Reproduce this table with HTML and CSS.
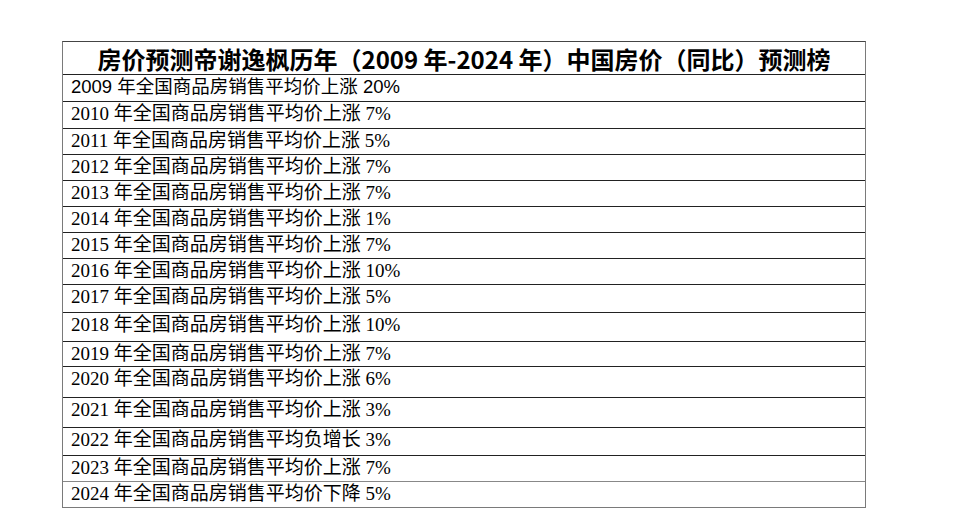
FILE: index.html
```html
<!DOCTYPE html>
<html lang="zh-CN">
<head>
<meta charset="utf-8">
<title>中国房价预测榜</title>
<link rel="stylesheet" href="styles.css">
</head>
<body>
<div class="page">
  <div class="table">
    <div class="title">房价预测帝谢逸枫历年（2009 年-2024 年）中国房价（同比）预测榜</div>
    <div class="row h27 first">2009 年全国商品房销售平均价上涨 20%</div>
    <div class="row h27">2010 年全国商品房销售平均价上涨 7%</div>
    <div class="row h26">2011 年全国商品房销售平均价上涨 5%</div>
    <div class="row h26">2012 年全国商品房销售平均价上涨 7%</div>
    <div class="row h26">2013 年全国商品房销售平均价上涨 7%</div>
    <div class="row h26">2014 年全国商品房销售平均价上涨 1%</div>
    <div class="row h26">2015 年全国商品房销售平均价上涨 7%</div>
    <div class="row h26">2016 年全国商品房销售平均价上涨 10%</div>
    <div class="row h28">2017 年全国商品房销售平均价上涨 5%</div>
    <div class="row h29">2018 年全国商品房销售平均价上涨 10%</div>
    <div class="row h25">2019 年全国商品房销售平均价上涨 7%</div>
    <div class="row h31">2020 年全国商品房销售平均价上涨 6%</div>
    <div class="row h30">2021 年全国商品房销售平均价上涨 3%</div>
    <div class="row h28">2022 年全国商品房销售平均负增长 3%</div>
    <div class="row h26">2023 年全国商品房销售平均价上涨 7%</div>
    <div class="row h26 last">2024 年全国商品房销售平均价下降 5%</div>
  </div>
</div>
</body>
</html>
```
FILE: styles.css
```css
html, body {
  margin: 0;
  padding: 0;
  background: #ffffff;
}

.page {
  padding: 41px 0 0 62px;
}

.table {
  width: 804px;
  box-sizing: border-box;
  border-top: 1px solid #444;
  border-left: 1px solid #7a7a7a;
  border-right: 1px solid #7a7a7a;
  border-bottom: 1px solid #7a7a7a;
}

.title {
  height: 32px;
  box-sizing: border-box;
  display: flex;
  align-items: center;
  justify-content: center;
  font-family: "Noto Sans CJK SC", "Noto Sans", sans-serif;
  font-weight: 700;
  font-size: 24px;
  color: #000;
  white-space: nowrap;
}

.row {
  box-sizing: border-box;
  border-top: 1px solid #222;
  padding-left: 8px;
  font-family: "Liberation Serif", "Noto Sans CJK SC", serif;
  font-size: 19px;
  line-height: 24px;
  color: #000;
  white-space: nowrap;
}

.row.first {
  font-family: "Liberation Sans", "Noto Sans CJK SC", sans-serif;
  font-size: 18.5px;
}

.row.last {
  border-top-color: #888;
}

.h25 { height: 25px; }
.h26 { height: 26px; }
.h27 { height: 27px; }
.h28 { height: 28px; }
.h29 { height: 29px; }
.h30 { height: 30px; }
.h31 { height: 31px; }
```
